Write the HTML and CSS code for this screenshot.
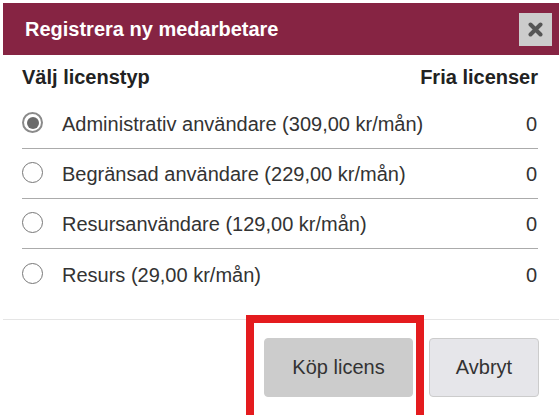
FILE: index.html
```html
<!DOCTYPE html>
<html lang="sv">
<head>
<meta charset="utf-8">
<link rel="stylesheet" href="styles.css">
</head>
<body>
<div class="dialog">
  <div class="header">
    <span class="title">Registrera ny medarbetare</span>
    <button class="close" aria-label="Stäng">
      <svg width="15" height="15" viewBox="0 0 15 15"><path d="M2.5 2.5 L12.5 12.5 M12.5 2.5 L2.5 12.5" stroke="#555" stroke-width="4" stroke-linecap="round"/></svg>
    </button>
  </div>
  <div class="content">
    <div class="thead">
      <span>Välj licenstyp</span>
      <span>Fria licenser</span>
    </div>
    <div class="row">
      <span class="radio checked"></span>
      <span class="label">Administrativ användare (309,00 kr/mån)</span>
      <span class="count">0</span>
    </div>
    <div class="row">
      <span class="radio"></span>
      <span class="label">Begränsad användare (229,00 kr/mån)</span>
      <span class="count">0</span>
    </div>
    <div class="row">
      <span class="radio"></span>
      <span class="label">Resursanvändare (129,00 kr/mån)</span>
      <span class="count">0</span>
    </div>
    <div class="row last">
      <span class="radio"></span>
      <span class="label">Resurs (29,00 kr/mån)</span>
      <span class="count">0</span>
    </div>
  </div>
  <div class="footer">
    <button class="btn buy">Köp licens</button>
    <button class="btn cancel">Avbryt</button>
  </div>
  <div class="highlight"></div>
</div>
</body>
</html>
```
FILE: styles.css
```css
html, body {
  margin: 0;
  padding: 0;
  background: #fff;
}
body {
  font-family: "Liberation Sans", Arial, sans-serif;
  color: #333;
}
.dialog {
  position: relative;
  margin: 3px 0 0 3px;
  width: 556px;
  height: 412px;
  background: #fff;
}
.header {
  height: 52px;
  background: #862443;
  display: flex;
  align-items: center;
  justify-content: space-between;
  padding: 0 7px 0 22px;
}
.title {
  color: #fff;
  font-weight: bold;
  font-size: 20px;
}
.close {
  width: 33px;
  height: 33px;
  border: none;
  background: #cccccc;
  padding: 0;
  display: flex;
  align-items: center;
  justify-content: center;
}
.content {
  padding: 0 21px 0 19px;
}
.thead {
  height: 44px;
  display: flex;
  align-items: center;
  justify-content: space-between;
  font-weight: bold;
  font-size: 20px;
  color: #222;
  padding-top: 1px;
  box-sizing: border-box;
}
.row {
  height: 50px;
  display: flex;
  align-items: center;
  border-bottom: 1px solid #ababab;
  font-size: 20px;
  color: #333;
  box-sizing: border-box;
  padding-top: 2px;
}
.row.last {
  border-bottom: none;
}
.radio {
  width: 21px;
  height: 21px;
  border: 1.5px solid #777;
  border-radius: 50%;
  margin-left: 0;
  margin-right: 19px;
  margin-top: -4px;
  box-sizing: border-box;
  position: relative;
  flex: none;
}
.radio.checked {
  border: 2px solid #8a8a8a;
}
.radio.checked::after {
  content: "";
  position: absolute;
  left: 2.5px;
  top: 2.5px;
  width: 12px;
  height: 12px;
  border-radius: 50%;
  background: #6a6a6a;
}
.label {
  flex: 1;
}
.count {
  padding-right: 1px;
}
.footer {
  margin-top: 20px;
  border-top: 1px solid #e5e5e5;
  display: flex;
  justify-content: flex-end;
  gap: 16px;
  padding: 18px 20px 0 0;
}
.btn {
  height: 59px;
  font-family: "Liberation Sans", Arial, sans-serif;
  font-size: 20px;
  color: #333;
  border-radius: 4px;
  border: 1px solid #cccccc;
}
.buy {
  width: 149px;
  background: #cccccc;
}
.cancel {
  width: 110px;
  background: #e6e6ea;
}
.highlight {
  position: absolute;
  left: 243px;
  top: 312px;
  width: 162px;
  height: 92px;
  border: 8px solid #e41b1e;
}
```
